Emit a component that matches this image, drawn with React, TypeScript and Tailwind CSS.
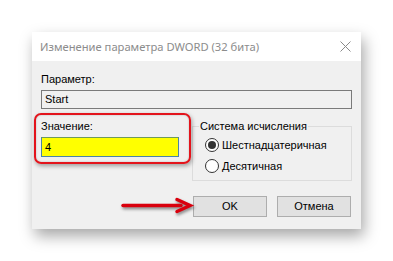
export default function App() {
  return (
    <div
      className="w-[393px] h-[261px] bg-white overflow-hidden pl-[32px] pt-[32px]"
      style={{ fontFamily: '"Liberation Sans", Arial, sans-serif' }}
    >
      <div className="w-[329px] h-[197px] bg-[#f0f0f0] flex flex-col shadow-[3px_7px_14px_rgba(0,0,0,0.35)]">
        {/* заголовок */}
        <div className="h-[29px] bg-white flex items-center justify-between pl-[8px] pr-[10px] shrink-0">
          <span className="font-['Noto_Sans',sans-serif] text-[11.2px] text-[#8c8c8c] leading-none">
            Изменение параметра DWORD (32 бита)
          </span>
          <svg width="11" height="11" viewBox="0 0 11 11" className="mb-[1px]">
            <path d="M0.5 0.5L10.5 10.5M10.5 0.5L0.5 10.5" stroke="#8a8a8a" strokeWidth="1" fill="none" />
          </svg>
        </div>

        <div className="flex flex-col px-[9px] pt-[10px] text-[11px] text-black">
          <div className="leading-[16px]">Параметр:</div>
          <div className="mt-[3px] h-[19px] border border-[#7a7a7a] flex items-center pl-[3px] leading-none">
            Start
          </div>

          <div className="flex mt-[9px] gap-[13px]">
            {/* значение */}
            <div className="relative w-[138px] flex flex-col">
              <div className="absolute -left-[7px] -top-[5px] w-[157px] h-[51px] rounded-[7px] border-[2.5px] border-[#e3141c] shadow-[1px_2px_4px_rgba(0,0,0,0.35),inset_0_0_2px_rgba(0,0,0,0.25)]" />
              <div className="leading-[16px]">Значение:</div>
              <div className="mt-[3px] h-[20px] bg-[#ffff00] border border-[#4a84a8] border-t-[#6f9a5a] flex items-center pl-[3px] leading-none">
                4
              </div>
            </div>

            {/* система исчисления */}
            <fieldset className="w-[160px] h-[63px] border border-[#dcdcdc] px-[6px]">
              <legend className="px-[1px] leading-[16px]">Система исчисления</legend>
              <label className="flex items-center gap-[3px] mt-[3px] ml-[6px] leading-[16px]">
                <span className="w-[14px] h-[14px] rounded-full border border-[#333] bg-white flex items-center justify-center">
                  <span className="w-[8px] h-[8px] rounded-full bg-[#333]" />
                </span>
                Шестнадцатеричная
              </label>
              <label className="flex items-center gap-[3px] mt-[5px] ml-[6px] leading-[16px]">
                <span className="w-[14px] h-[14px] rounded-full border border-[#333] bg-white" />
                Десятичная
              </label>
            </fieldset>
          </div>

          {/* кнопки */}
          <div className="flex justify-end gap-[10px] mt-[15px] pr-[1px]">
            <div className="relative">
              <svg
                width="74"
                height="20"
                viewBox="0 0 74 20"
                className="absolute right-full top-[1px] mr-[-2px]"
                style={{ filter: 'drop-shadow(1px 2px 1.5px rgba(0,0,0,0.45))' }}
              >
                <path d="M2 8.5H60" stroke="#d9000d" strokeWidth="3.5" strokeLinecap="round" />
                <path d="M56 2.5L69 8.5L56 14.5" stroke="#d9000d" strokeWidth="3.5" fill="none" strokeLinejoin="miter" strokeLinecap="round" />
              </svg>
              <button className="w-[74px] h-[21px] bg-[#e1e1e1] border border-[#adadad] leading-none text-[11px]">OK</button>
            </div>
            <button className="w-[74px] h-[21px] bg-[#e1e1e1] border border-[#adadad] leading-none text-[11px]">Отмена</button>
          </div>
        </div>
      </div>
    </div>
  );
}
